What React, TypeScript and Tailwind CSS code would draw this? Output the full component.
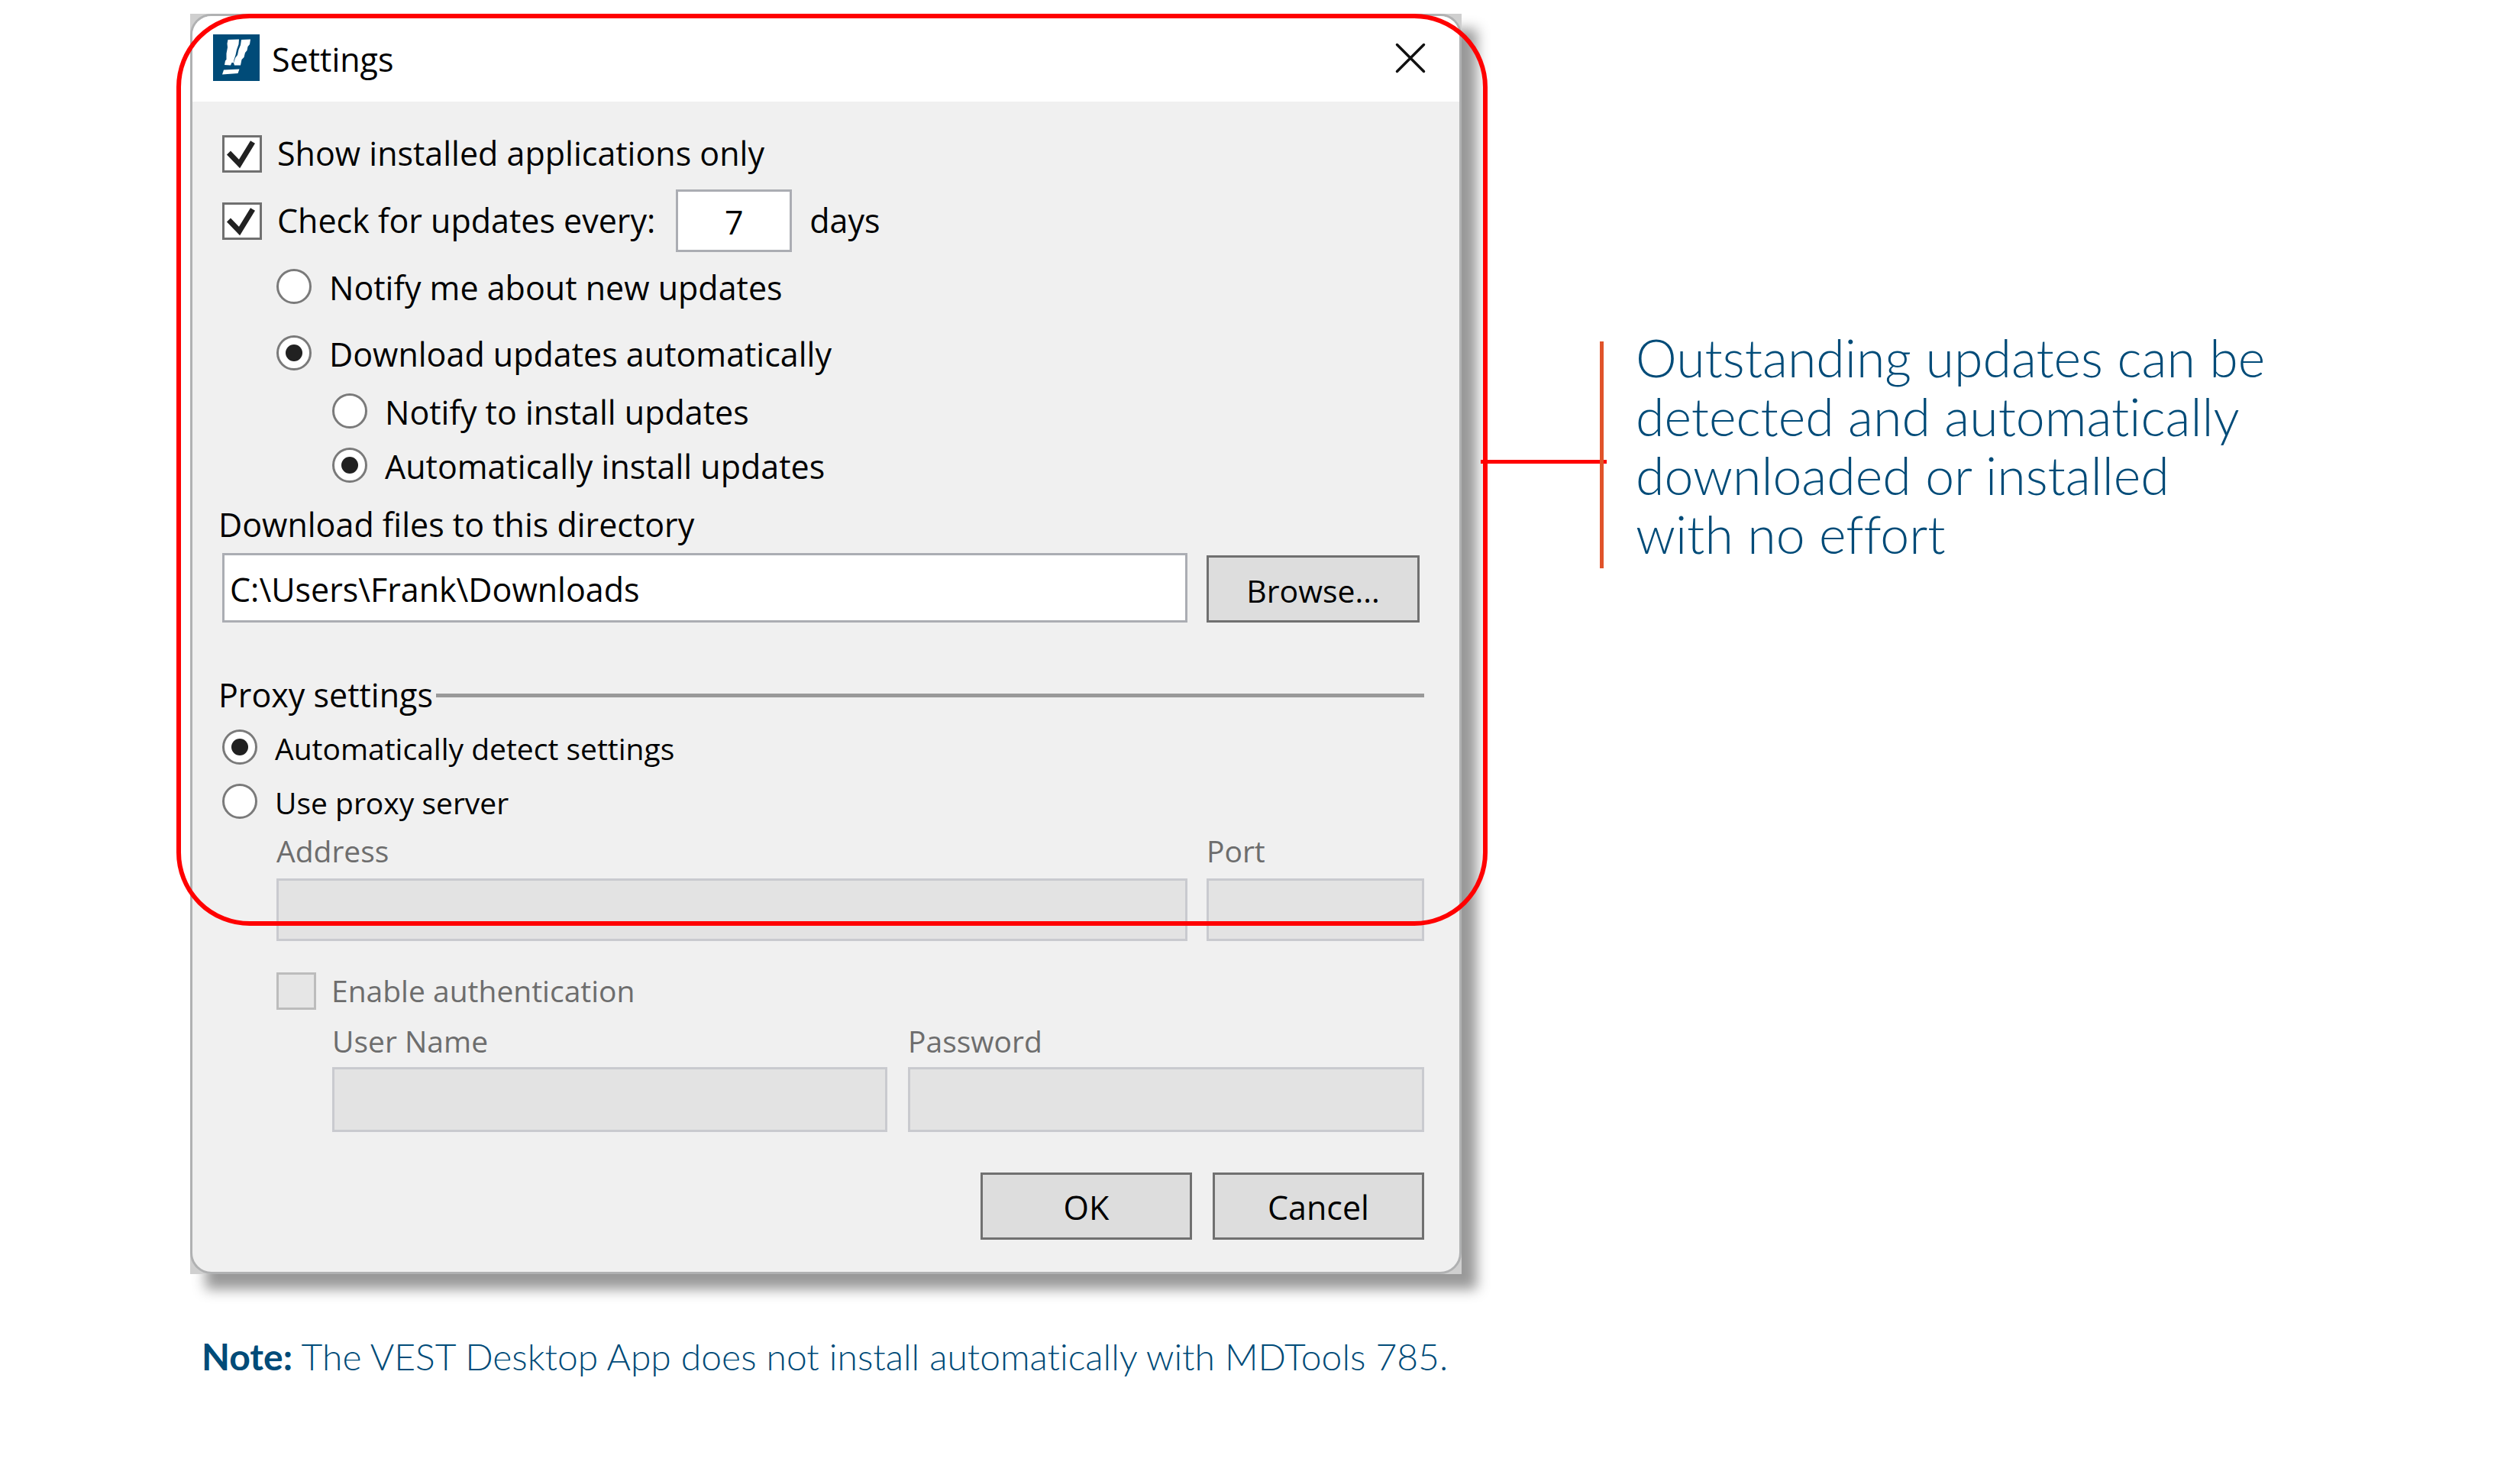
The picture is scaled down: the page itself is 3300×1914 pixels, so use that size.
import { useState } from "react";
import type { InputHTMLAttributes, ReactNode } from "react";

const fieldClass =
  "w-full border-[3px] border-[#abadb3] bg-white pt-[3px] text-black outline-none disabled:border-[#c9cacf] disabled:bg-[#e3e3e3]";
const buttonClass =
  "h-[88px] border-[3px] border-[#707070] bg-[#dddddd] pt-1 text-center text-black hover:bg-[#e5f1fb]";

function AppLogo() {
  return (
    <svg viewBox="0 0 61 61" className="size-[61px] shrink-0" aria-hidden="true">
      <rect width="61" height="61" fill="#004b78" />
      <path
        fill="#fff"
        d="M19.500 7 34 6.500 33.500 13 31 20 29.500 27 27.500 33 27 37 24.500 37 23 40.500 15 40 16 34.500 17.500 33 17.500 25 19 17 18.500 12Z"
      />
      <path
        fill="#fff"
        d="M37 7 49 6.500 48 13 45.500 16 44.500 21 42 24 40.500 30 37.500 33 36 40.500 28 40.500 27 37.500 29 31 32 27 33.500 20 36 14Z"
      />
      <path fill="#fff" d="M14 46.500 34.500 45.500 32.500 51 12 52.500Z" />
    </svg>
  );
}

function CheckBox({
  label,
  ...props
}: { label: string } & InputHTMLAttributes<HTMLInputElement>) {
  return (
    <label className="flex items-center gap-5">
      <span className="relative h-[49px] w-[52px] shrink-0">
        <input
          type="checkbox"
          className="peer block h-full w-full appearance-none border-[3px] border-[#707070] bg-white disabled:border-[#bcbcbc] disabled:bg-[#e6e6e6]"
          {...props}
        />
        <svg
          viewBox="0 0 52 49"
          className="pointer-events-none absolute inset-0 hidden h-full w-full peer-checked:block"
          aria-hidden="true"
        >
          <path
            fill="none"
            stroke="#212121"
            strokeWidth="7"
            d="M8.500 23 22.500 37.500 40 9"
          />
        </svg>
      </span>
      <span>{label}</span>
    </label>
  );
}

function Radio({
  label,
  ...props
}: { label: string } & InputHTMLAttributes<HTMLInputElement>) {
  return (
    <label className="flex items-center gap-[23px]">
      <input
        type="radio"
        className="mb-1 grid size-[46px] shrink-0 appearance-none place-items-center rounded-full border-[3px] border-[#7a7a7a] bg-white before:size-[22px] before:rounded-full checked:before:bg-[#212121]"
        {...props}
      />
      <span>{label}</span>
    </label>
  );
}

function Row({ className, children }: { className: string; children: ReactNode }) {
  return <div className={"flex items-center " + className}>{children}</div>;
}

function SettingsDialog() {
  const [installedOnly, setInstalledOnly] = useState(true);
  const [checkUpdates, setCheckUpdates] = useState(true);
  const [days, setDays] = useState("7");
  const [mode, setMode] = useState("download");
  const [install, setInstall] = useState("auto");
  const [directory, setDirectory] = useState("C:\\Users\\Frank\\Downloads");
  const [proxy, setProxy] = useState("detect");
  const manual = proxy === "manual";

  return (
    <section
      aria-label="Settings"
      className="bg-[#cfcfcf] font-['Open_Sans','Noto_Sans',sans-serif] text-[43px] leading-[54px] whitespace-nowrap text-black shadow-[20px_20px_16px_0px_#999999]"
    >
      <div className="overflow-hidden rounded-[28px] border-[3px] border-[#b0b1b2] bg-[#f0f0f0]">
        <header className="flex h-[112px] items-center justify-between bg-white pr-10 pb-[3px] pl-[27px]">
          <div className="flex items-center gap-4">
            <AppLogo />
            <h1 className="pt-1">Settings</h1>
          </div>
          <button type="button" aria-label="Close" className="p-1">
            <svg viewBox="0 0 40 40" className="size-10" aria-hidden="true">
              <path
                d="M2.500 2.500 37.500 37.500M37.500 2.500 2.500 37.500"
                stroke="#111"
                strokeWidth="3.500"
                strokeLinecap="round"
              />
            </svg>
          </button>
        </header>

        <form
          className="pt-6 pr-[46px] pb-[42px] pl-[34px]"
          onSubmit={(e) => e.preventDefault()}
        >
          <Row className="h-[88px] pl-[5px]">
            <CheckBox
              label="Show installed applications only"
              checked={installedOnly}
              onChange={(e) => setInstalledOnly(e.target.checked)}
            />
          </Row>
          <Row className="h-[88px] gap-[27px] pl-[5px]">
            <CheckBox
              label="Check for updates every:"
              checked={checkUpdates}
              onChange={(e) => setCheckUpdates(e.target.checked)}
            />
            <span className="w-[152px]">
              <input
                id="days"
                className={fieldClass + " block h-[82px] text-center"}
                value={days}
                onChange={(e) => setDays(e.target.value)}
              />
            </span>
            <label htmlFor="days" className="-ml-1">
              days
            </label>
          </Row>
          <Row className="h-[87px] pl-[76px]">
            <Radio
              name="mode"
              label="Notify me about new updates"
              checked={mode === "notify"}
              onChange={() => setMode("notify")}
            />
          </Row>
          <Row className="h-[88px] pl-[76px]">
            <Radio
              name="mode"
              label="Download updates automatically"
              checked={mode === "download"}
              onChange={() => setMode("download")}
            />
          </Row>
          <Row className="h-16 pl-[149px]">
            <Radio
              name="install"
              label="Notify to install updates"
              checked={install === "notify"}
              onChange={() => setInstall("notify")}
            />
          </Row>
          <Row className="h-[78px] pl-[149px]">
            <Radio
              name="install"
              label="Automatically install updates"
              checked={install === "auto"}
              onChange={() => setInstall("auto")}
            />
          </Row>

          <Row className="h-[74px]">
            <label htmlFor="directory">Download files to this directory</label>
          </Row>
          <div className="grid grid-cols-[1fr_285px] items-end gap-[25px] pl-[5px]">
            <input
              id="directory"
              className={fieldClass + " h-[91px] px-[7px]"}
              value={directory}
              onChange={(e) => setDirectory(e.target.value)}
            />
            <button type="button" className={buttonClass + " w-[279px] text-[41px]"}>
              Browse...
            </button>
          </div>

          <fieldset>
            <Row className="mt-[60px] h-[70px] gap-1">
              <span>Proxy settings</span>
              <span className="h-[5px] flex-1 bg-[#999999]" />
            </Row>
            <div className="pl-[5px] text-[39px]">
              <Row className="h-[70px]">
                <Radio
                  name="proxy"
                  label="Automatically detect settings"
                  checked={proxy === "detect"}
                  onChange={() => setProxy("detect")}
                />
              </Row>
              <Row className="h-[72px]">
                <Radio
                  name="proxy"
                  label="Use proxy server"
                  checked={manual}
                  onChange={() => setProxy("manual")}
                />
              </Row>
            </div>
            <div className="pl-[76px] text-[39px] text-[#6d6d6d]">
              <div className="grid grid-cols-[1fr_285px] gap-[25px]">
                <div>
                  <label htmlFor="address" className="block pb-[9px]">
                    Address
                  </label>
                  <input
                    id="address"
                    disabled={!manual}
                    className={fieldClass + " block h-[82px] px-[7px]"}
                  />
                </div>
                <div>
                  <label htmlFor="port" className="block pb-[9px]">
                    Port
                  </label>
                  <input
                    id="port"
                    disabled={!manual}
                    className={fieldClass + " block h-[82px] px-[7px]"}
                  />
                </div>
              </div>
              <Row className="mt-[34px] h-[62px]">
                <CheckBox label="Enable authentication" disabled={!manual} />
              </Row>
              <div className="grid grid-cols-[727fr_676fr] gap-[27px] pl-[73px]">
                <div>
                  <label htmlFor="user" className="block pt-2 pb-[7px]">
                    User Name
                  </label>
                  <input
                    id="user"
                    disabled={!manual}
                    className={fieldClass + " block h-[85px] px-[7px]"}
                  />
                </div>
                <div>
                  <label htmlFor="password" className="block pt-2 pb-[7px]">
                    Password
                  </label>
                  <input
                    id="password"
                    type="password"
                    disabled={!manual}
                    className={fieldClass + " block h-[85px] px-[7px]"}
                  />
                </div>
              </div>
            </div>
          </fieldset>

          <div className="mt-[53px] flex justify-end gap-[27px]">
            <button type="submit" className={buttonClass + " w-[277px]"}>
              OK
            </button>
            <button type="button" className={buttonClass + " w-[277px]"}>
              Cancel
            </button>
          </div>
        </form>
      </div>
    </section>
  );
}

export default function App() {
  return (
    <main className="min-h-screen bg-white pt-[18px] pl-[249px] font-[Lato,sans-serif] font-light text-[#004b78] [font-variant-ligatures:none]">
      <div className="grid grid-cols-[1665fr_1386fr]">
        <div className="relative font-normal">
          <SettingsDialog />
          <div className="pointer-events-none absolute top-0 -right-[34px] -left-[18px] h-[1194px] rounded-[96px] border-[6px] border-[#ff0000]" />
        </div>
        <aside className="relative flex items-start pt-[411px] pl-[25px]">
          <span className="mt-[173px] -mr-[9px] h-[5px] w-[165px] bg-[#ff0000]" />
          <span className="mt-[18px] h-[297px] w-[5px] bg-[#e0532a]" />
          <p className="pl-[42px] text-[68px] leading-[77px] whitespace-nowrap">
            Outstanding updates can be
            <br />
            detected and automatically
            <br />
            downloaded or installed
            <br />
            with no effort
          </p>
        </aside>
      </div>
      <p className="mt-[79px] pl-[15px] text-[48px] leading-[58px]">
        <strong className="font-bold">Note:</strong> The VEST Desktop App does not install
        automatically with MDTools 785.
      </p>
    </main>
  );
}
